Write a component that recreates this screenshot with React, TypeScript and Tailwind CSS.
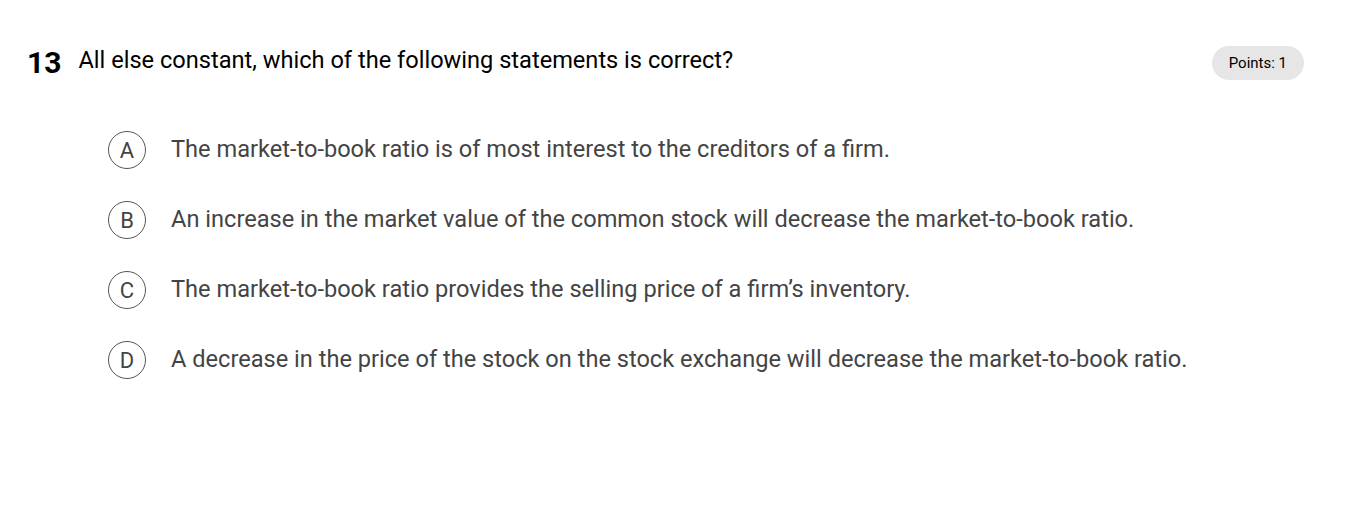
import React from "react";

const options = [
  { l: "A", t: "The market-to-book ratio is of most interest to the creditors of a firm." },
  { l: "B", t: "An increase in the market value of the common stock will decrease the market-to-book ratio." },
  { l: "C", t: "The market-to-book ratio provides the selling price of a firm\u2019s inventory." },
  { l: "D", t: "A decrease in the price of the stock on the stock exchange will decrease the market-to-book ratio." },
];

export default function App() {
  return (
    <div className="w-[1345px] h-[508px] bg-white font-['Roboto',sans-serif] pl-[27px] pr-[41px] pt-[46px]">
      <div className="flex items-start">
        <div className="text-[30px] font-bold leading-[34px] text-black">13</div>
        <div className="ml-[17px] text-[23.6px] leading-[28px] text-black flex-1">
          All else constant, which of the following statements is correct?
        </div>
        <div className="h-[34px] px-[17px] rounded-full bg-[#e6e6e6] text-[15px] text-black flex items-center">
          Points: 1
        </div>
      </div>
      <div className="mt-[51px] ml-[81px] flex flex-col gap-[32px]">
        {options.map((o) => (
          <div key={o.l} className="flex items-center">
            <div className="w-[38px] h-[38px] rounded-full border border-[#555] flex items-center justify-center text-[22px] text-[#444]">
              {o.l}
            </div>
            <div className="ml-[25px] text-[23.6px] text-[#444]">{o.t}</div>
          </div>
        ))}
      </div>
    </div>
  );
}
